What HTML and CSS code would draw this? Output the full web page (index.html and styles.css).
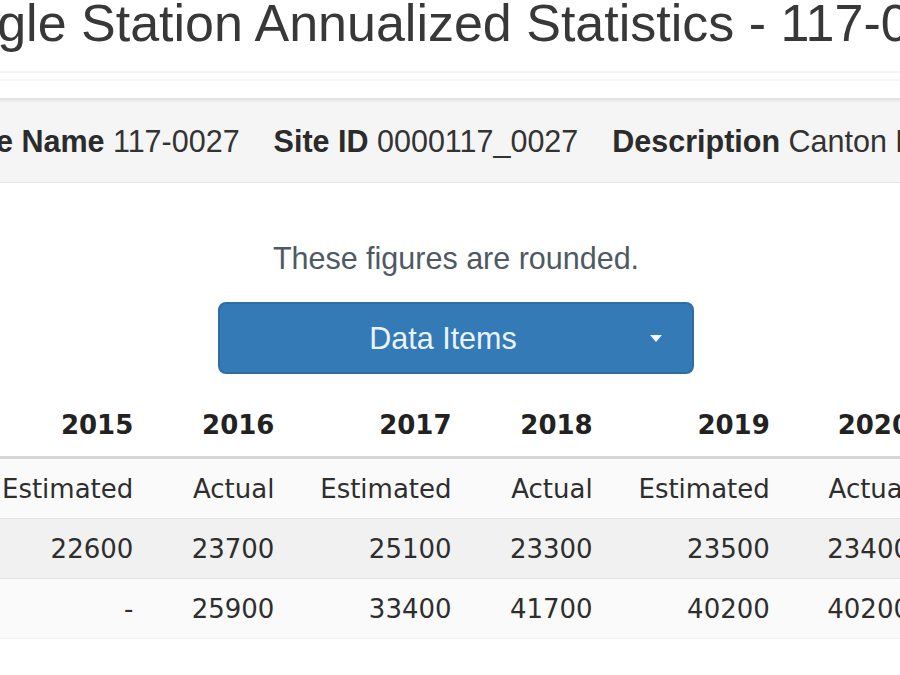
FILE: index.html
```html
<!DOCTYPE html>
<html lang="en">
<head>
<meta charset="utf-8">
<title>Single Station Annualized Statistics</title>
<link rel="stylesheet" href="styles.css">
</head>
<body>
<div class="page">
  <h1 class="title">Single Station Annualized Statistics - 117-0027</h1>
  <div class="rule"></div>
  <div class="rule rule-2"></div>
  <div class="info">
    <span class="item"><b>Site Name</b> 117-0027</span>
    <span class="item"><b>Site ID</b> 0000117_0027</span>
    <span class="item"><b>Description</b> Canton Rd</span>
  </div>
  <div class="center">
    <p class="note">These figures are rounded.</p>
    <button class="select" type="button"><span class="select-label">Data Items</span><span class="caret"></span></button>
  </div>
  <table class="stats">
    <colgroup>
      <col class="c-label">
      <col class="c-est"><col class="c-act"><col class="c-est"><col class="c-act"><col class="c-est"><col class="c-act2">
    </colgroup>
    <thead>
      <tr><th class="lbl"></th><th>2015</th><th>2016</th><th>2017</th><th>2018</th><th>2019</th><th>2020</th></tr>
    </thead>
    <tbody>
      <tr class="r1"><td class="lbl">Type</td><td>Estimated</td><td>Actual</td><td>Estimated</td><td>Actual</td><td>Estimated</td><td>Actual</td></tr>
      <tr class="r2"><td class="lbl">AADT</td><td>22600</td><td>23700</td><td>25100</td><td>23300</td><td>23500</td><td>23400</td></tr>
      <tr class="r3"><td class="lbl">Volume</td><td>-</td><td>25900</td><td>33400</td><td>41700</td><td>40200</td><td>40200</td></tr>
    </tbody>
  </table>
</div>
</body>
</html>
```

FILE: styles.css
```css
html, body {
  margin: 0;
  padding: 0;
  background: #ffffff;
  overflow: hidden;
  width: 900px;
  height: 675px;
}

.page {
  width: 912px;
  font-family: "Liberation Sans", Arial, sans-serif;
  color: #333333;
}

.title {
  margin: -5px 0 0 -78px;
  font-size: 52px;
  line-height: 56px;
  font-weight: normal;
  white-space: nowrap;
  color: #383838;
}

.rule {
  margin-top: 20px;
  margin-left: -100px;
  width: 1200px;
  border-top: 2px solid #f3f3f3;
}

.rule-2 {
  margin-top: 6px;
  border-top-color: #f6f6f6;
}

.info {
  margin: 17px 0 0 -100px;
  width: 1300px;
  height: 85px;
  box-sizing: border-box;
  padding: 0 31px 0 56px;
  background: #f5f5f5;
  border: 1px solid #e6e6e6;
  border-top: 2px solid #e3e3e3;
  box-shadow: inset 0 2px 2px rgba(0, 0, 0, 0.04);
  display: flex;
  align-items: center;
  gap: 34px;
  font-size: 30.5px;
  white-space: nowrap;
}

.info b {
  font-weight: bold;
  color: #2b2b2b;
}

.center {
  display: flex;
  flex-direction: column;
  align-items: center;
}

.note {
  margin: 54px 0 0 0;
  font-size: 30.5px;
  line-height: 42px;
  color: #4e5964;
}

.select {
  margin-top: 23px;
  width: 476px;
  height: 72px;
  box-sizing: border-box;
  display: flex;
  align-items: center;
  padding: 0 30px 0 0;
  background: #337ab7;
  border: 2px solid #2e6da4;
  border-radius: 8px;
  color: #ffffff;
  font-family: "Liberation Sans", Arial, sans-serif;
  font-size: 30.5px;
}

.select-label {
  flex: 1;
  margin-left: 16px;
  text-align: center;
  color: #eaf4ff;
}

.caret {
  width: 0;
  height: 0;
  border-top: 7px solid #f4f8ff;
  border-left: 6px solid transparent;
  border-right: 6px solid transparent;
}

.stats {
  margin: 20px 0 0 -232px;
  border-collapse: collapse;
  table-layout: fixed;
  width: 1154px;
  font-family: "DejaVu Sans", Verdana, sans-serif;
  font-size: 26px;
  color: #2e2e2e;
}

.c-label { width: 200px; }
.c-est { width: 177px; }
.c-act { width: 141px; }
.c-act2 { width: 140px; }

.stats th,
.stats td {
  text-align: right;
  padding: 0 12px;
  line-height: 36px;
  white-space: nowrap;
  overflow: hidden;
}

.stats th {
  font-weight: bold;
  padding-top: 13px;
  padding-bottom: 13px;
  border-bottom: 3px solid #d6d6d6;
  color: #222222;
}

.stats td {
  padding-top: 12px;
  padding-bottom: 11px;
  border-top: 1px solid #e2e2e2;
}

.stats .lbl {
  text-align: left;
}

.r1 td { background: #fafafa; }
.r2 td { background: #f1f1f1; }
.r3 td { background: #fafafa; border-bottom: 1px solid #f0f0f0; }
```
